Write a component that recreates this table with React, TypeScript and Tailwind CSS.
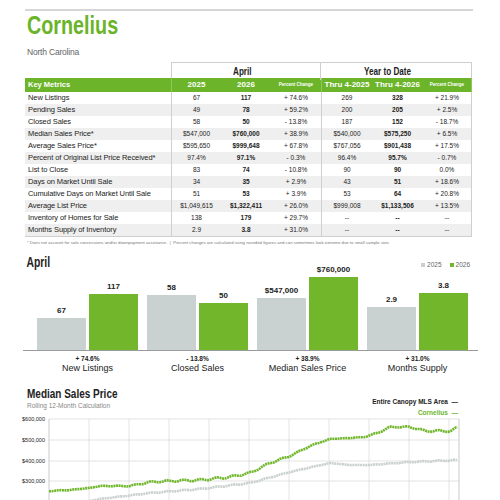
import React from 'react';

const rows: string[][] = [
  ['New Listings', '67', '117', '+ 74.6%', '269', '328', '+ 21.9%'],
  ['Pending Sales', '49', '78', '+ 59.2%', '200', '205', '+ 2.5%'],
  ['Closed Sales', '58', '50', '- 13.8%', '187', '152', '- 18.7%'],
  ['Median Sales Price*', '$547,000', '$760,000', '+ 38.9%', '$540,000', '$575,250', '+ 6.5%'],
  ['Average Sales Price*', '$595,650', '$999,648', '+ 67.8%', '$767,056', '$901,438', '+ 17.5%'],
  ['Percent of Original List Price Received*', '97.4%', '97.1%', '- 0.3%', '96.4%', '95.7%', '- 0.7%'],
  ['List to Close', '83', '74', '- 10.8%', '90', '90', '0.0%'],
  ['Days on Market Until Sale', '34', '35', '+ 2.9%', '43', '51', '+ 18.6%'],
  ['Cumulative Days on Market Until Sale', '51', '53', '+ 3.9%', '53', '64', '+ 20.8%'],
  ['Average List Price', '$1,049,615', '$1,322,411', '+ 26.0%', '$999,008', '$1,133,506', '+ 13.5%'],
  ['Inventory of Homes for Sale', '138', '179', '+ 29.7%', '--', '--', '--'],
  ['Months Supply of Inventory', '2.9', '3.8', '+ 31.0%', '--', '--', '--'],
];

const bars = [
  { label: 'New Listings', change: '+ 74.6%', a: '67', b: '117', ha: 32, hb: 56 },
  { label: 'Closed Sales', change: '- 13.8%', a: '58', b: '50', ha: 55, hb: 47 },
  { label: 'Median Sales Price', change: '+ 38.9%', a: '$547,000', b: '$760,000', ha: 52, hb: 73 },
  { label: 'Months Supply', change: '+ 31.0%', a: '2.9', b: '3.8', ha: 43, hb: 57 },
];

// rough trace of the two series, page coords (x, y)
const greenPts: [number, number][] = [
  [49, 492], [70, 491], [89, 489], [100, 487], [130, 487], [150, 483], [170, 482], [200, 481],
  [230, 478], [250, 474], [270, 464], [290, 457], [310, 447], [330, 440], [350, 439], [365, 438],
  [380, 433], [390, 428], [410, 428], [418, 430], [425, 432], [452, 432], [459, 427],
];
const grayPts: [number, number][] = [
  [49, 512], [75, 505], [100, 500], [150, 494], [200, 490], [250, 484], [290, 473], [330, 464],
  [350, 466], [370, 466], [410, 463], [459, 461],
];

function trace(pts: [number, number][], amp: number) {
  const out: string[] = [];
  for (let x = pts[0][0]; x <= pts[pts.length - 1][0]; x += 3) {
    let i = 0;
    while (i < pts.length - 2 && pts[i + 1][0] < x) i++;
    const [x0, y0] = pts[i];
    const [x1, y1] = pts[i + 1];
    const t = Math.min(1, Math.max(0, (x - x0) / (x1 - x0)));
    const y = y0 + (y1 - y0) * t + Math.sin(x * 1.7) * amp + Math.sin(x * 0.37) * amp * 0.8;
    out.push(`${x - 20},${(y - 415).toFixed(1)}`);
  }
  return out.join(' ');
}

const LineChart = () => (
  <svg width="450" height="90" className="block">
    {[5, 26, 47, 67, 88].map((y) => (
      <line key={y} x1="29" x2="439" y1={y} y2={y} stroke="#dcdcdc" strokeWidth="0.8" />
    ))}
    {[69, 109, 149, 189, 229, 269, 309, 349, 389, 429].map((x) => (
      <line key={x} x1={x} x2={x} y1="5" y2="90" stroke="#dcdcdc" strokeWidth="0.8" />
    ))}
    <line x1="29" x2="29" y1="5" y2="90" stroke="#bdbdbd" strokeWidth="0.8" />
    <line x1="439" x2="439" y1="5" y2="90" stroke="#bdbdbd" strokeWidth="0.8" />
    {['$600,000', '$500,000', '$400,000', '$300,000'].map((t, i) => (
      <text key={t} x="25" y={[5, 26, 47, 67][i] + 2} textAnchor="end" fontSize="5.5" fill="#222" fontFamily="Liberation Sans, Arial, sans-serif">
        {t}
      </text>
    ))}
    <polyline points={trace(grayPts, 0.3)} fill="none" stroke="#c9d1cf" strokeWidth="2.6" strokeLinejoin="round" strokeDasharray="2 0.6" />
    <polyline points={trace(greenPts, 0.6)} fill="none" stroke="#6fb62a" strokeWidth="2.6" strokeLinejoin="round" strokeDasharray="2 0.6" />
  </svg>
);

const cond = "inline-block origin-left scale-x-[0.74] whitespace-nowrap font-['Liberation_Sans',Arial,sans-serif] font-bold";

export default function App() {
  return (
    <div className="w-[500px] h-[500px] overflow-hidden bg-white text-[#222] font-['Liberation_Sans',Arial,sans-serif]">
      <div className="pt-[9px] px-[25px]">
        <div className="border-t-2 border-[#d6d6d6] w-[448px]" />
        <div className="pl-[2px] pt-[1px] h-[26px] leading-[26px] text-[26px] text-[#6ab42a]">
          <span className={cond + ' scale-x-[0.76]'}>Cornelius</span>
        </div>
        <div className="pl-[2px] mt-[10px] text-[8.5px] leading-[10px] text-[#666] tracking-[-0.2px]">North Carolina</div>

        {/* table */}
        <div className="mt-[5px] w-[447px]">
          <div className="grid grid-cols-[146px_150px_151px] h-[16px]">
            <div />
            <div className="border border-b-0 border-[#cfcfcf] flex items-center justify-center">
              <span className={cond + ' origin-center text-[11px]'}>April</span>
            </div>
            <div className="border border-b-0 border-l-0 border-[#cfcfcf] flex items-center justify-center">
              <span className={cond + ' origin-center text-[11px]'}>Year to Date</span>
            </div>
          </div>
          <div className="grid grid-cols-[146px_50px_50px_50px_51px_51px_49px] h-[14px] bg-[#6cb52b] text-white items-center font-bold">
            <div className="pl-[3px] text-[7.5px]">Key Metrics</div>
            <div className="text-center text-[8px] border-l border-[#8fc75a] h-full leading-[14px]">2025</div>
            <div className="text-center text-[8px]">2026</div>
            <div className="text-center text-[4.5px]">Percent Change</div>
            <div className="text-center text-[8px] border-l border-[#8fc75a] h-full leading-[14px]">Thru 4-2025</div>
            <div className="text-center text-[8px]">Thru 4-2026</div>
            <div className="text-center text-[4.5px] border-r border-[#8fc75a] h-full leading-[14px]">Percent Change</div>
          </div>
          {rows.map((r, i) => (
            <div
              key={r[0]}
              className={`grid grid-cols-[146px_50px_50px_50px_51px_51px_49px] h-[12px] items-center text-[6.5px] ${i % 2 === 1 ? 'bg-[#efefef]' : 'bg-white'}`}
            >
              <div className="pl-[3px] text-[7.5px] whitespace-nowrap tracking-[-0.1px]">{r[0]}</div>
              <div className="text-center border-l border-[#cfcfcf] h-full leading-[12px]">{r[1]}</div>
              <div className="text-center font-bold">{r[2]}</div>
              <div className="text-center">{r[3]}</div>
              <div className="text-center border-l border-[#cfcfcf] h-full leading-[12px]">{r[4]}</div>
              <div className="text-center font-bold">{r[5]}</div>
              <div className="text-center border-r border-[#cfcfcf] h-full leading-[12px]">{r[6]}</div>
            </div>
          ))}
          <div className="border-t border-[#cfcfcf]" />
        </div>
        <div className="pl-[2px] mt-[3px] text-[4.3px] leading-[6px] text-[#777] whitespace-nowrap">
          * Does not account for sale concessions and/or downpayment assistance. &nbsp;|&nbsp; Percent changes are calculated using rounded figures and can sometimes look extreme due to small sample size.
        </div>

        {/* bar chart */}
        <div className="mt-[8px] flex justify-between items-start h-[16px]">
          <span className={cond + ' text-[14px] leading-[16px] pl-[2px]'}>April</span>
          <div className="flex gap-[8px] text-[6.5px] text-[#666] pr-[5px] pt-[6px]">
            <span className="flex items-center gap-[2px]"><span className="w-[4px] h-[4px] bg-[#c9d2d0]" />2025</span>
            <span className="flex items-center gap-[2px]"><span className="w-[4px] h-[4px] bg-[#72b62b]" />2026</span>
          </div>
        </div>
        <div className="ml-[-2px] w-[455px] border-b border-[#9a9a9a] h-[81px] flex items-end pl-[14px] gap-[9px]">
          {bars.map((b) => (
            <div key={b.label} className="flex items-end gap-[3px]">
              {[
                [b.a, b.ha, 'bg-[#c9d2d0]'],
                [b.b, b.hb, 'bg-[#72b62b]'],
              ].map(([v, h, c]) => (
                <div key={String(c)} className="w-[49px] flex flex-col items-center">
                  <span className="text-[8px] font-bold leading-[10px] mb-[2px]">{v}</span>
                  <div className={`w-full ${c}`} style={{ height: Number(h) }} />
                </div>
              ))}
            </div>
          ))}
        </div>
        <div className="flex pl-[12px] gap-[9px]">
          {bars.map((b) => (
            <div key={b.label} className="w-[101px] flex flex-col items-center">
              <span className="text-[6.5px] font-bold leading-[8px] mt-[4px]">{b.change}</span>
              <span className="text-[9px] leading-[11px]">{b.label}</span>
            </div>
          ))}
        </div>

        {/* line chart */}
        <div className="mt-[13px] flex justify-between h-[27px]">
          <div className="pl-[2px] flex flex-col items-start">
            <span className={cond + ' text-[13.5px] leading-[14px] h-[14px]'}>Median Sales Price</span>
            <span className="text-[6.5px] text-[#888] leading-[8px] mt-[1px]">Rolling 12-Month Calculation</span>
          </div>
          <div className="text-right text-[6.5px] font-bold leading-[11px] pt-[9px] pr-[17px]">
            <div className="text-[#222]">Entire Canopy MLS Area &nbsp;—</div>
            <div className="text-[#6cb52b]">Cornelius &nbsp;—</div>
          </div>
        </div>
      </div>
      <div className="pl-[20px]">
        <LineChart />
      </div>
    </div>
  );
}
